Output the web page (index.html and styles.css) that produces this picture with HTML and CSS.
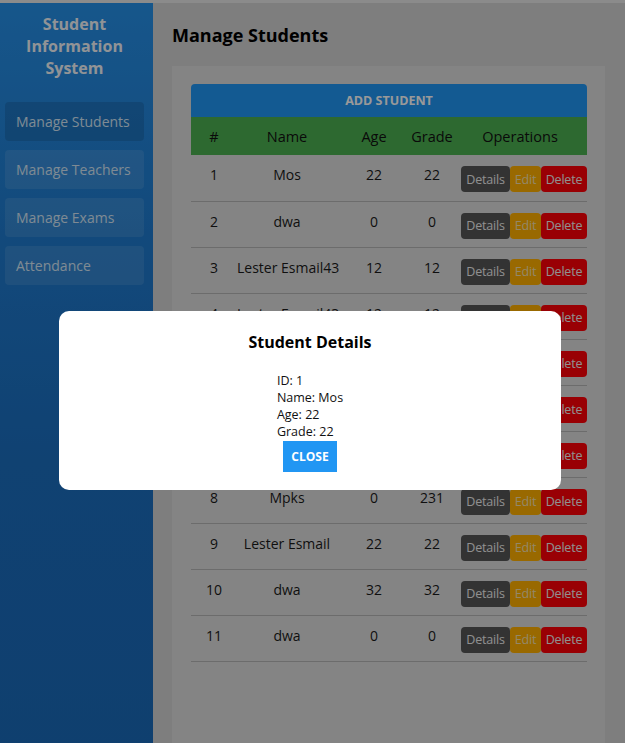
FILE: index.html
```html
<!DOCTYPE html>
<html lang="en">
<head>
<meta charset="utf-8">
<title>Student Information System</title>
<link rel="stylesheet" href="styles.css">
</head>
<body>
<div class="app">
  <aside class="sidebar">
    <div class="brand">Student Information System</div>
    <nav class="nav">
      <a class="nav-item active">Manage Students</a>
      <a class="nav-item">Manage Teachers</a>
      <a class="nav-item">Manage Exams</a>
      <a class="nav-item">Attendance</a>
    </nav>
  </aside>
  <main class="main">
    <h1 class="page-title">Manage Students</h1>
    <section class="card">
      <button class="add-btn">ADD STUDENT</button>
      <table class="table">
        <colgroup>
          <col class="c-id"><col class="c-name"><col class="c-age"><col class="c-grade"><col class="c-ops">
        </colgroup>
        <thead>
          <tr><th>#</th><th>Name</th><th>Age</th><th>Grade</th><th>Operations</th></tr>
        </thead>
        <tbody>
          <tr><td>1</td><td>Mos</td><td>22</td><td>22</td><td class="ops"><div class="ops-group"><span class="btn btn-details">Details</span><span class="btn btn-edit">Edit</span><span class="btn btn-delete">Delete</span></div></td></tr>
          <tr><td>2</td><td>dwa</td><td>0</td><td>0</td><td class="ops"><div class="ops-group"><span class="btn btn-details">Details</span><span class="btn btn-edit">Edit</span><span class="btn btn-delete">Delete</span></div></td></tr>
          <tr><td>3</td><td>Lester Esmail43</td><td>12</td><td>12</td><td class="ops"><div class="ops-group"><span class="btn btn-details">Details</span><span class="btn btn-edit">Edit</span><span class="btn btn-delete">Delete</span></div></td></tr>
          <tr><td>4</td><td>Lester Esmail43</td><td>12</td><td>12</td><td class="ops"><div class="ops-group"><span class="btn btn-details">Details</span><span class="btn btn-edit">Edit</span><span class="btn btn-delete">Delete</span></div></td></tr>
          <tr><td>5</td><td>Lester Esmail</td><td>12</td><td>12</td><td class="ops"><div class="ops-group"><span class="btn btn-details">Details</span><span class="btn btn-edit">Edit</span><span class="btn btn-delete">Delete</span></div></td></tr>
          <tr><td>6</td><td>dwa</td><td>0</td><td>0</td><td class="ops"><div class="ops-group"><span class="btn btn-details">Details</span><span class="btn btn-edit">Edit</span><span class="btn btn-delete">Delete</span></div></td></tr>
          <tr><td>7</td><td>Mos</td><td>22</td><td>22</td><td class="ops"><div class="ops-group"><span class="btn btn-details">Details</span><span class="btn btn-edit">Edit</span><span class="btn btn-delete">Delete</span></div></td></tr>
          <tr><td>8</td><td>Mpks</td><td>0</td><td>231</td><td class="ops"><div class="ops-group"><span class="btn btn-details">Details</span><span class="btn btn-edit">Edit</span><span class="btn btn-delete">Delete</span></div></td></tr>
          <tr><td>9</td><td>Lester Esmail</td><td>22</td><td>22</td><td class="ops"><div class="ops-group"><span class="btn btn-details">Details</span><span class="btn btn-edit">Edit</span><span class="btn btn-delete">Delete</span></div></td></tr>
          <tr><td>10</td><td>dwa</td><td>32</td><td>32</td><td class="ops"><div class="ops-group"><span class="btn btn-details">Details</span><span class="btn btn-edit">Edit</span><span class="btn btn-delete">Delete</span></div></td></tr>
          <tr><td>11</td><td>dwa</td><td>0</td><td>0</td><td class="ops"><div class="ops-group"><span class="btn btn-details">Details</span><span class="btn btn-edit">Edit</span><span class="btn btn-delete">Delete</span></div></td></tr>
        </tbody>
      </table>
    </section>
  </main>
</div>

<div class="overlay">
  <div class="modal">
    <h2 class="modal-title">Student Details</h2>
    <div class="detail-list">
      <div>ID: 1</div>
      <div>Name: Mos</div>
      <div>Age: 22</div>
      <div>Grade: 22</div>
    </div>
    <div class="modal-actions"><button class="close-btn">CLOSE</button></div>
  </div>
</div>
</body>
</html>
```

FILE: styles.css
```css
* { box-sizing: border-box; }

html, body {
  margin: 0;
  padding: 0;
  height: 100%;
  overflow: hidden;
}

body {
  font-family: "Open Sans", "Noto Sans", sans-serif;
  background: #e8e8e8;
  color: #1a1a1a;
  padding-top: 3px;
}

.app {
  display: flex;
  min-height: 740px;
}

.sidebar {
  width: 153px;
  flex: 0 0 153px;
  background: linear-gradient(to bottom, #2690e8 0%, #1f7bcf 30%, #1b6ebf 60%, #1a6ab9 100%);
  padding: 10px 9px 0 5px;
  min-height: 740px;
}

.brand {
  font-weight: 700;
  font-size: 16px;
  line-height: 22px;
  color: #f2f6fa;
  text-align: center;
  padding: 0 14px;
  margin-bottom: 23px;
}

.nav {
  display: flex;
  flex-direction: column;
  gap: 9px;
}

.nav-item {
  display: block;
  height: 39px;
  line-height: 39px;
  padding: 0 11px;
  border-radius: 4px;
  font-size: 14px;
  color: #d4e6f6;
  background: rgba(255, 255, 255, 0.1);
  white-space: nowrap;
}

.nav-item.active {
  background: rgba(0, 0, 0, 0.12);
}

.main {
  flex: 1;
  background: #d3d3d3;
  padding: 20px 20px 0 19px;
}

.page-title {
  margin: 0 0 19px 0;
  font-size: 18px;
  line-height: 24px;
  font-weight: 700;
  color: #000;
}

.card {
  background: #dddddd;
  padding: 18px 18px 19px 19px;
  min-height: 700px;
}

.add-btn {
  display: block;
  width: 100%;
  height: 33px;
  border: 0;
  border-radius: 4px 4px 0 0;
  background: #2196f3;
  color: #fff;
  font-family: inherit;
  font-weight: 700;
  font-size: 12.5px;
  padding: 0;
}

.table {
  width: 100%;
  border-collapse: collapse;
  table-layout: fixed;
  font-size: 14px;
}

.c-id { width: 46px; }
.c-name { width: 100px; }
.c-age { width: 74px; }
.c-grade { width: 42px; }
.c-ops { width: 134px; }

.table thead th {
  background: #4caf50;
  height: 38px;
  font-weight: 400;
  font-size: 14.5px;
  color: #111;
  text-align: center;
  padding: 0;
}

.table tbody td {
  height: 46px;
  border-bottom: 1px solid #b4b4b4;
  text-align: center;
  padding: 0 0 6px 0;
  white-space: nowrap;
  color: #1a1a1a;
}

.table tbody td.ops {
  text-align: right;
  padding: 3px 0 0 0;
}

.ops-group {
  display: inline-flex;
  vertical-align: middle;
}

.btn {
  display: flex;
  align-items: center;
  justify-content: center;
  height: 26px;
  font-size: 12.5px;
  letter-spacing: -0.2px;
  color: #f0f0f0;
  border-radius: 4px;
  white-space: nowrap;
}

.btn-details { width: 49px; background: #555555; }
.btn-edit { width: 31px; background: #ffb000; color: #f5e2b0; }
.btn-delete { width: 46px; background: #ff0008; }

.overlay {
  position: fixed;
  inset: 0;
  background: rgba(0, 0, 0, 0.4);
  display: flex;
  justify-content: center;
  align-items: flex-start;
  padding: 311px 64px 0 59px;
}

.modal {
  width: 502px;
  height: 179px;
  background: #fff;
  border-radius: 10px;
  padding: 20px 0 20px 0;
  text-align: center;
}

.modal-title {
  margin: 0 0 18px 0;
  font-size: 16px;
  line-height: 22px;
  font-weight: 700;
  color: #000;
}

.detail-list {
  display: inline-block;
  text-align: left;
  font-size: 12.5px;
  line-height: 17px;
  padding-top: 1px;
  color: #111;
}

.modal-actions {
  display: flex;
  justify-content: center;
}

.close-btn {
  width: 54px;
  height: 31px;
  border: 0;
  border-radius: 0;
  background: #2196f3;
  color: #fff;
  font-family: inherit;
  font-weight: 700;
  font-size: 12px;
  padding: 0;
}
```
